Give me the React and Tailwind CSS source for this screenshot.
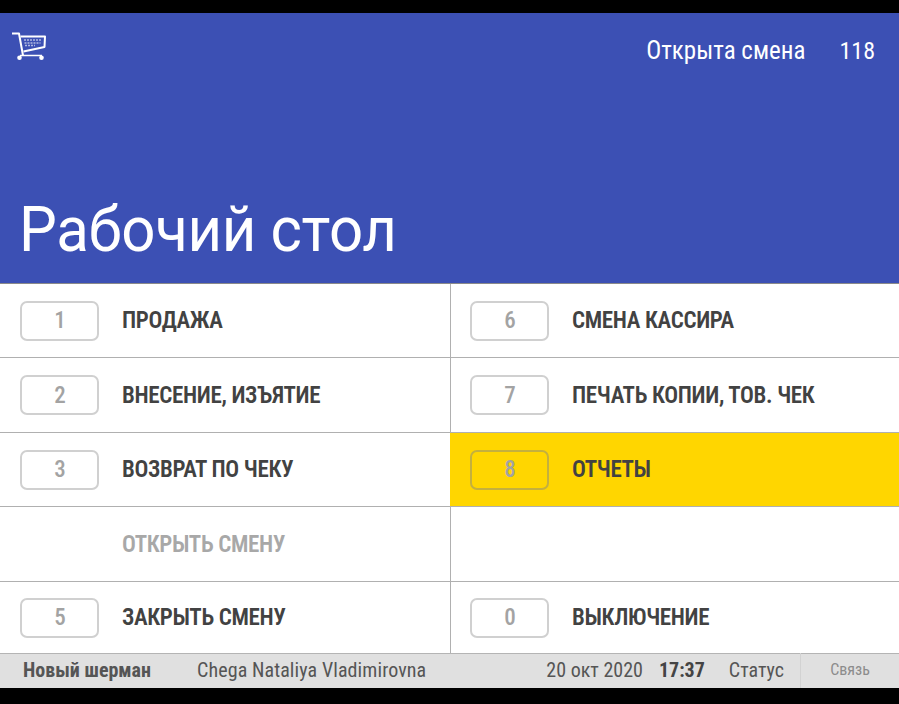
import React from 'react';

const left = [
  { key: '1', label: 'ПРОДАЖА' },
  { key: '2', label: 'ВНЕСЕНИЕ, ИЗЪЯТИЕ' },
  { key: '3', label: 'ВОЗВРАТ ПО ЧЕКУ' },
  { label: 'ОТКРЫТЬ СМЕНУ', disabled: true },
  { key: '5', label: 'ЗАКРЫТЬ СМЕНУ' },
];

const right = [
  { key: '6', label: 'СМЕНА КАССИРА' },
  { key: '7', label: 'ПЕЧАТЬ КОПИИ, ТОВ. ЧЕК' },
  { key: '8', label: 'ОТЧЕТЫ', active: true },
  {},
  { key: '0', label: 'ВЫКЛЮЧЕНИЕ' },
];

const heights = ['h-[74px]', 'h-[75px]', 'h-[74px]', 'h-[75px]', 'h-[71px]'];

const CartIcon = () => (
  <svg width="35" height="29" viewBox="0 0 35 29" fill="none" className="text-white">
    <path d="M0 1.500h7l4 22" stroke="currentColor" strokeWidth="2" strokeLinejoin="round" />
    <path d="M8 23.500h22" stroke="currentColor" strokeWidth="1.500" />
    <path d="M8.500 4.500h24.500l-.5 10.500-21 4.500" stroke="currentColor" strokeWidth="2" strokeLinejoin="round" />
    <path d="M12 8h18M12.500 11h16M13 13.500h10" stroke="currentColor" strokeWidth="1.500" strokeDasharray="2 1" opacity=".6" />
    <circle cx="7.500" cy="25.700" r="2.300" fill="currentColor" />
    <circle cx="29.500" cy="25.700" r="2.300" fill="currentColor" />
  </svg>
);

const MenuRow = ({ item, height, last, divider }) => (
  <div
    className={`flex items-center ${height} ${last ? '' : 'border-b border-b-[#b0b0b0]'} ${item.active ? 'bg-[#ffd600] pl-5' : 'bg-white'} ${divider && !item.active ? 'border-l border-l-[#b0b0b0] pl-[19px]' : ''} ${!divider ? 'pl-5' : ''}`}
  >
    {item.key ? (
      <div className={`flex h-[40px] w-[79px] shrink-0 items-center justify-center rounded-[7px] border-2 pt-[2px] pl-[1px] text-[23px] font-medium text-[#a3a3a3] [font-stretch:75%] ${item.active ? 'border-[#c4b03e]' : 'border-[#d0d0d0]'}`}>
        {item.key}
      </div>
    ) : (
      <div className="w-[79px] shrink-0" />
    )}
    {item.label && (
      <span className={`ml-[23px] pt-[2px] text-[23px] font-semibold tracking-[-0.35px] whitespace-nowrap [font-stretch:75%] ${item.disabled ? 'text-[#a8a8a8]' : 'text-[#424242]'}`}>
        {item.label}
      </span>
    )}
  </div>
);

export default function App() {
  return (
    <div className="flex h-[704px] w-[899px] flex-col overflow-hidden bg-black pt-[13px] pb-[16px] font-['Roboto',sans-serif]">
      {/* Header */}
      <header className="flex h-[271px] shrink-0 flex-col justify-between border-b border-[#8a8a8a] bg-[#3c50b4] text-white">
        <div className="flex items-start justify-between pt-[19px] pr-6 pl-3">
          <CartIcon />
          <div className="flex gap-[34px] pt-[4px] text-[25px] leading-[30px] [font-stretch:75%]">
            <span>Открыта смена</span>
            <span className="text-[24px]">118</span>
          </div>
        </div>
        <h1 className="origin-bottom scale-y-[1.05] pb-[15px] pl-[19px] text-[60px] leading-[70px] font-normal tracking-[-0.35px]">Рабочий стол</h1>
      </header>

      {/* Menu */}
      <main className="grid grow grid-cols-[450px_449px]">
        <div>
          {left.map((item, i) => (
            <MenuRow key={i} item={item} height={heights[i]} last={i === 4} />
          ))}
        </div>
        <div>
          {right.map((item, i) => (
            <MenuRow key={i} item={item} height={heights[i]} last={i === 4} divider />
          ))}
        </div>
      </main>

      {/* Status bar */}
      <footer className="flex h-[35px] shrink-0 items-center border-t border-[#b4b4b4] bg-[#e0e0e0] pb-[2px] text-[#555] [font-stretch:75%]">
        <span className="ml-[23px] w-[174px] text-[20px] font-bold">Новый шерман</span>
        <span className="text-[20px] tracking-[0.1px]">Chega Nataliya Vladimirovna</span>
        <span className="ml-auto text-[20px]">20 окт 2020</span>
        <span className="ml-4 text-[20px] font-bold text-[#444]">17:37</span>
        <span className="ml-6 text-[20px]">Статус</span>
        <span className="ml-4 flex h-[35px] w-[99px] items-center justify-center border-l border-[#d2d2d2] text-[16px] text-[#8c8c8c]">Связь</span>
      </footer>
    </div>
  );
}
